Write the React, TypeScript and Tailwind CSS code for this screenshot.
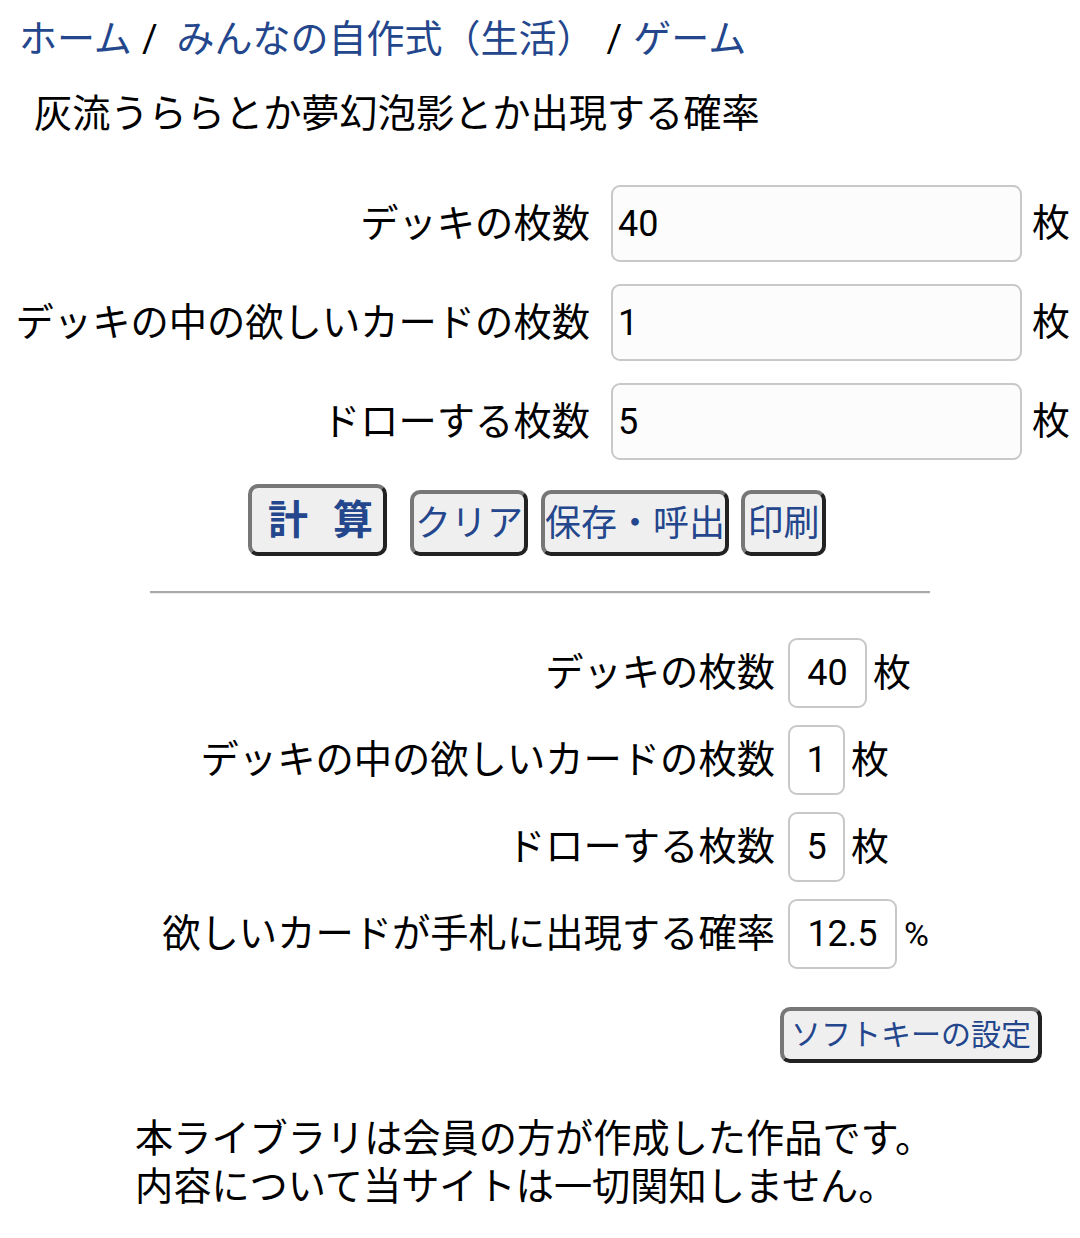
import React from 'react';

const font = { fontFamily: 'Roboto, "Noto Sans CJK JP", sans-serif' };

const inputRows = [
  { label: 'デッキの枚数', value: '40' },
  { label: 'デッキの中の欲しいカードの枚数', value: '1' },
  { label: 'ドローする枚数', value: '5' },
];

const resultRows = [
  { label: 'デッキの枚数', value: '40', unit: '枚', w: 'w-[79px]' },
  { label: 'デッキの中の欲しいカードの枚数', value: '1', unit: '枚', w: 'w-[57px]' },
  { label: 'ドローする枚数', value: '5', unit: '枚', w: 'w-[57px]' },
  { label: '欲しいカードが手札に出現する確率', value: '12.5', unit: '%', w: 'w-[109px]' },
];

const btn =
  'rounded-[10px] border-4 border-t-[#777] border-l-[#777] border-b-[#222] border-r-[#222] bg-[#efefef] text-[#23468c] leading-none whitespace-nowrap';

const App: React.FC = () => {
  return (
    <div className="w-[1080px] h-[1238px] bg-white text-black" style={font}>
      <nav className="pl-[19px] pt-[17px] text-[38px] leading-[44px] whitespace-nowrap">
        <a className="text-[#23468c]">ホーム</a>
        <span className="ml-[10px] mr-[19px]">/</span>
        <a className="text-[#23468c]">みんなの自作式（生活）</a>
        <span className="ml-[12px] mr-[11px]">/</span>
        <a className="text-[#23468c]">ゲーム</a>
      </nav>
      <h1 className="pl-[34px] pt-[30px] text-[38.2px] leading-[46px] font-normal">
        灰流うららとか夢幻泡影とか出現する確率
      </h1>

      <div className="mt-[48px] flex flex-col gap-[22px]">
        {inputRows.map((r) => (
          <div key={r.label} className="flex items-center">
            <div className="w-[592px] text-right text-[38.3px] pr-[2px] whitespace-nowrap">{r.label}</div>
            <input
              readOnly
              value={r.value}
              className="ml-[19px] w-[411px] h-[77px] rounded-[9px] border-2 border-[#c8c8c8] bg-[#fcfcfc] px-[5px] text-[36px] outline-none"
            />
            <span className="ml-[10px] text-[38px]">枚</span>
          </div>
        ))}
      </div>

      <div className="mt-[23px] flex items-center justify-start pl-[248px]">
        <button className={`${btn} w-[139px] h-[72px] text-[40px] font-bold pt-[3px] flex items-center pl-[16px]`}>
          <span>計</span>
          <span className="ml-[25px]">算</span>
        </button>
        <button className={`${btn} ml-[23px] mt-[7px] w-[118px] h-[66px] text-[36px] pt-[2px]`}>クリア</button>
        <button className={`${btn} ml-[13px] mt-[7px] w-[188px] h-[66px] text-[36px] pt-[2px]`}>保存・呼出</button>
        <button className={`${btn} ml-[12px] mt-[7px] w-[85px] h-[66px] text-[36px] pt-[2px]`}>印刷</button>
      </div>

      <hr className="mx-[150px] mt-[35px] border-0 border-t-2 border-t-[#aaa] border-b border-b-[#eee]" />

      <div className="mt-[44px] flex flex-col gap-[17px]">
        {resultRows.map((r) => (
          <div key={r.label} className="flex items-center">
            <div className="w-[775px] text-right text-[38.3px] whitespace-nowrap">{r.label}</div>
            <input
              readOnly
              value={r.value}
              className={`ml-[13px] ${r.w} h-[70px] rounded-[9px] border-2 border-[#c8c8c8] bg-white text-center text-[36px] outline-none`}
            />
            <span className={r.unit === '%' ? 'ml-[7px] text-[34px]' : 'ml-[6px] text-[38px]'}>{r.unit}</span>
          </div>
        ))}
      </div>

      <div className="mt-[38px] flex justify-end pr-[38px]">
        <button className={`${btn} w-[262px] h-[56px] text-[30px]`}>ソフトキーの設定</button>
      </div>

      <p className="mt-[52px] pl-[135px] text-[38.2px] leading-[48px]">
        本ライブラリは会員の方が作成した作品です。
        <br />
        内容について当サイトは一切関知しません。
      </p>
    </div>
  );
};

export default App;
